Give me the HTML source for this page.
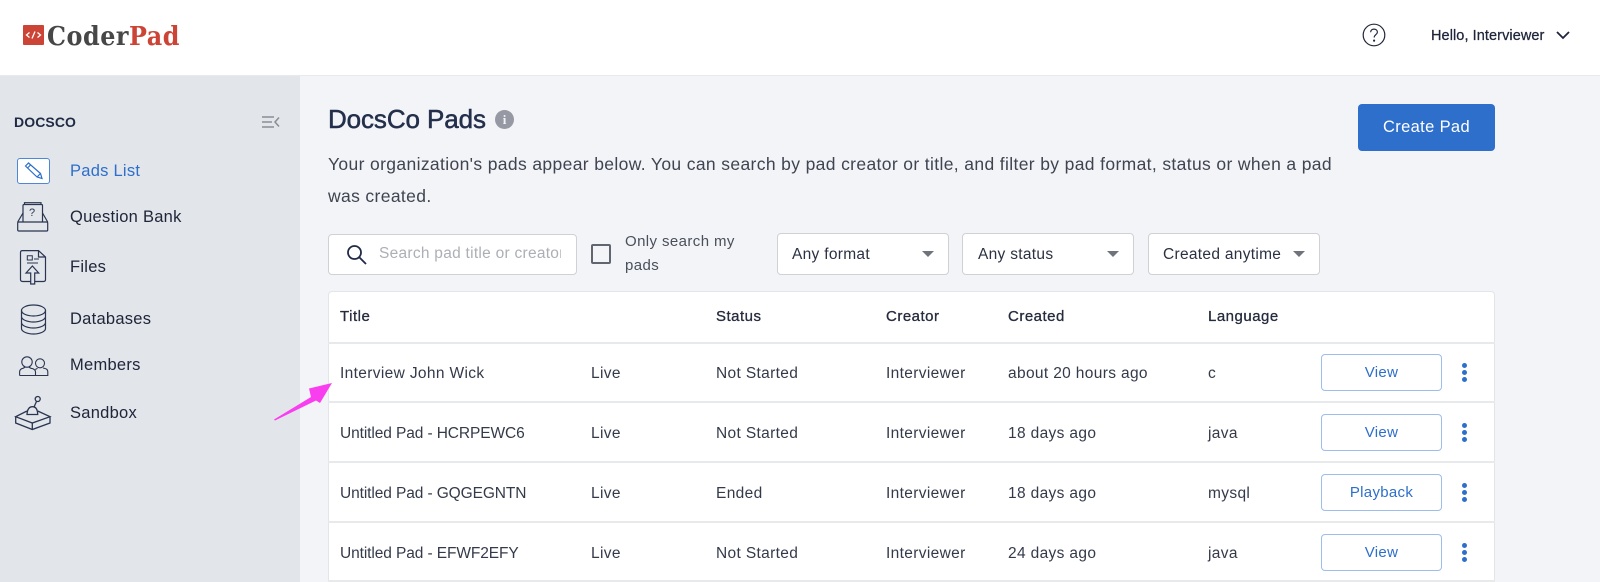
<!DOCTYPE html>
<html lang="en"><head><meta charset="utf-8"><title>CoderPad</title>
<style>
html,body{margin:0;padding:0;width:1600px;height:582px;overflow:hidden}
body{position:relative;background:#f3f4f8;font-family:"Liberation Sans",sans-serif;color:#2a3040}
.t{position:absolute;white-space:nowrap;line-height:20px;height:20px}
.abs{position:absolute;box-sizing:border-box}
.side{font-size:16.500px;color:#20263a;left:70px;letter-spacing:.26px}
.th{font-size:15px;color:#252b3d;letter-spacing:.5px;-webkit-text-stroke:.3px #252b3d}
.td{font-size:15.500px;color:#343a4a;letter-spacing:.35px}
.td.u{letter-spacing:-.1px}
.sel{background:#fff;border:1px solid #cfd1d4;border-radius:4px;top:233px;height:42px}
.sel i{position:absolute;top:17px;width:0;height:0;border-left:6px solid transparent;border-right:6px solid transparent;border-top:6px solid #6f737b}
.seltx{font-size:15.500px;color:#2b3142;letter-spacing:.3px;top:245px}
.btn{left:1321px;width:121px;height:37px;background:#fff;border:1px solid #9dbdec;border-radius:4px;text-align:center;font-size:15px;line-height:35px;color:#2d6fcb;letter-spacing:.3px}
.line{left:328px;width:1167px;height:2px;background:#e8e9eb}
.dot{width:5px;height:5px;border-radius:50%;background:#2d6fcb;left:1462px}
svg{position:absolute;overflow:visible}
</style></head><body>

<div class="abs" style="left:0;top:0;width:1600px;height:76px;background:#fff;border-bottom:1px solid #e8e9ec"></div>
<div class="abs" style="left:0;top:76px;width:300px;height:506px;background:#e2e5ea"></div>

<!-- logo -->
<div class="abs" style="left:23px;top:25px;width:21px;height:20px;background:#cc4435;border-radius:1px"></div>
<svg style="left:23px;top:25px" width="21" height="20" fill="none" stroke="#fff" stroke-width="1.300"><path d="M6.500 7.500 3.500 10l3 2.500M14.500 7.500l3 2.500-3 2.500M12 6.500 9 13.500"/></svg>
<div class="t" style="left:47px;top:21px;height:32px;line-height:32px;font-family:'DejaVu Serif Condensed','DejaVu Serif',serif;font-stretch:condensed;font-weight:bold;font-size:26.500px;letter-spacing:.55px;color:#474747">Coder<span style="color:#cc4435">Pad</span></div>

<!-- header right -->
<svg style="left:1362px;top:23px" width="24" height="24" fill="none" stroke="#20263a" stroke-width="1.200"><circle cx="12" cy="12" r="10.800"/><path d="M8.600 9.300c0-2 1.500-3.200 3.400-3.200s3.400 1.200 3.400 3c0 2.400-3.200 2.600-3.200 5.400"/><circle cx="12.100" cy="17.600" r=".5" fill="#20263a"/></svg>
<div class="t" style="left:1431px;top:26px;font-size:14.500px;color:#20263a;letter-spacing:.08px;-webkit-text-stroke:.25px #20263a">Hello, Interviewer</div>
<svg style="left:1556px;top:31px" width="14" height="9" fill="none" stroke="#20263a" stroke-width="1.800"><path d="M1 1l6 6 6-6"/></svg>

<!-- sidebar -->
<div class="t" style="left:14px;top:112px;font-size:14px;font-weight:bold;color:#1f2a44;letter-spacing:.1px">DOCSCO</div>
<svg style="left:262px;top:116px" width="18" height="12" fill="none" stroke="#8a8d94" stroke-width="1.500"><path d="M0 1h12M0 6h10M0 11h12M17 1.500 13 6l4 4.500"/></svg>

<div class="abs" style="left:17px;top:158px;width:33px;height:26px;background:#fff;border:1.500px solid #4f86d6;border-radius:3px"></div>
<svg style="left:17px;top:158px" width="33" height="26" fill="none" stroke="#2d6fcb" stroke-width="1.200"><path d="M8.500 8 11.500 5 23.500 15.500 25 20.500 20 19ZM10.500 10 13.500 7M23.500 15.500 20 19"/></svg>
<div class="t side" style="top:161px;color:#2d6fcb">Pads List</div>

<svg style="left:17px;top:202px" width="32" height="30" fill="none" stroke="#2a3550" stroke-width="1.200"><path d="M6 20V3.500Q6 2.500 7 2.500H24.500Q25.500 2.500 25.500 3.500V20M7.500 2.500V.7H24V2.500"/><path d="M.7 20 6 11M30.700 20 25.500 11"/><rect x=".7" y="20" width="30" height="9" rx="1"/><text x="12" y="14" font-family="Liberation Sans,sans-serif" font-size="11" fill="#2a3550" stroke="none">?</text></svg>
<div class="t side" style="top:207px">Question Bank</div>

<svg style="left:19px;top:250px" width="28" height="35" fill="none" stroke="#2a3550" stroke-width="1.200"><path d="M11.500 31.500H3.500Q1.500 31.500 1.500 29.500V2.500Q1.500 .6 3.500 .6H19.500L26.500 7V29.500Q26.500 31.500 24.500 31.500H16M19.500 .6V7H26.500"/><path d="M8.300 5.700h5v4.300h-5zM15 9h5M8 13h11" stroke-width="1"/><path d="M15.700 34V23H19.700L13.400 16 7 23H11.700V34Z" stroke-width="1.200"/></svg>
<div class="t side" style="top:257px">Files</div>

<svg style="left:20px;top:304px" width="27" height="31" fill="none" stroke="#2a3550" stroke-width="1.200"><ellipse cx="13.500" cy="6.500" rx="12" ry="5.500"/><path d="M1.500 6.500V24.500C1.500 27.500 7 30 13.500 30S25.500 27.500 25.500 24.500V6.500M1.500 12.500C1.500 15.500 7 18 13.500 18S25.500 15.500 25.500 12.500M1.500 18.500C1.500 21.500 7 24 13.500 24S25.500 21.500 25.500 18.500"/></svg>
<div class="t side" style="top:309px">Databases</div>

<svg style="left:19px;top:356px" width="30" height="21" fill="none" stroke="#2a3550" stroke-width="1.100"><circle cx="8" cy="6" r="5.200"/><circle cx="21" cy="7.300" r="4.500"/><path d="M.6 19.500V16Q.6 13 4 12.300L6 11.300M10 11.300 12 12.300Q16.500 13 16.500 16V19.500H.6M16.500 19.500H28.800V16Q28.800 13 26 12.500L24 12M18.500 12.300 16.300 13.500"/></svg>
<div class="t side" style="top:355px">Members</div>

<svg style="left:15px;top:396px" width="36" height="35" fill="none" stroke="#2a3550" stroke-width="1.300"><circle cx="22.700" cy="3" r="2.500"/><path d="M21.500 5.500 19 11"/><path d="M12 18.500Q12.500 10.700 17.500 10.700T22.700 18.500Z"/><path d="M12 15 .7 20.700 17.300 27 35 20.700 22.700 15"/><path d="M.7 20.700V27L17.300 33.500 35 27V20.700M17.300 27V33.500"/></svg>
<div class="t side" style="top:403px">Sandbox</div>

<!-- title -->
<div class="t" style="left:328px;top:104px;height:30px;line-height:30px;font-size:26px;color:#232f4b;letter-spacing:-.1px;-webkit-text-stroke:.5px #232f4b">DocsCo Pads</div>
<div class="abs" style="left:495px;top:110px;width:19px;height:19px;border-radius:50%;background:#9699a3;color:#f3f4f8;font:bold 13px/19px 'Liberation Serif',serif;text-align:center">i</div>
<div class="t" style="left:328px;top:154px;font-size:17.500px;color:#3f4450;letter-spacing:.36px">Your organization's pads appear below. You can search by pad creator or title, and filter by pad format, status or when a pad</div>
<div class="t" style="left:328px;top:186px;font-size:17.500px;color:#3f4450;letter-spacing:.36px">was created.</div>

<div class="abs" style="left:1358px;top:104px;width:137px;height:47px;background:#2d6fcb;border-radius:4px;color:#fff;font-size:16.500px;line-height:46px;text-align:center;letter-spacing:.35px">Create Pad</div>

<!-- search -->
<div class="abs" style="left:328px;top:234px;width:249px;height:41px;background:#fff;border:1px solid #cfd1d4;border-radius:4px"></div>
<svg style="left:346px;top:244px" width="22" height="21" fill="none" stroke="#1f2a44" stroke-width="1.800"><circle cx="8.500" cy="8.500" r="6.500"/><path d="M13.500 13.500 20 20"/></svg>
<div class="abs" style="left:379px;top:244px;width:182px;height:20px;overflow:hidden"><span class="t" style="left:0;top:0;font-size:15.500px;color:#acafb6;letter-spacing:.27px">Search pad title or creator</span></div>
<div class="abs" style="left:591px;top:244px;width:20px;height:20px;border:2px solid #60656f;border-radius:2px;background:#f3f4f8"></div>
<div class="t" style="left:625px;top:232px;font-size:15px;color:#4a4f5b;letter-spacing:.4px">Only search my</div>
<div class="t" style="left:625px;top:256px;font-size:15px;color:#4a4f5b;letter-spacing:.4px">pads</div>

<div class="abs sel" style="left:777px;width:172px"><i style="left:144px"></i></div>
<div class="t seltx" style="left:792px">Any format</div>
<div class="abs sel" style="left:962px;width:172px"><i style="left:144px"></i></div>
<div class="t seltx" style="left:978px">Any status</div>
<div class="abs sel" style="left:1148px;width:172px"><i style="left:144px"></i></div>
<div class="t seltx" style="left:1163px">Created anytime</div>

<!-- table -->
<div class="abs" style="left:328px;top:291px;width:1167px;height:291px;background:#fff;border:1px solid #e4e5e8;border-bottom:0;border-radius:4px 4px 0 0"></div>
<div class="abs line" style="top:342px"></div>
<div class="abs line" style="top:401px"></div>
<div class="abs line" style="top:461px"></div>
<div class="abs line" style="top:521px"></div>
<div class="abs line" style="top:580px"></div>

<div class="t th" style="left:340px;top:307px">Title</div>
<div class="t th" style="left:716px;top:307px">Status</div>
<div class="t th" style="left:886px;top:307px">Creator</div>
<div class="t th" style="left:1008px;top:307px">Created</div>
<div class="t th" style="left:1208px;top:307px">Language</div>

<div class="t td" style="left:340px;top:364px">Interview John Wick</div>
<div class="t td" style="left:591px;top:364px">Live</div>
<div class="t td" style="left:716px;top:364px">Not Started</div>
<div class="t td" style="left:886px;top:364px">Interviewer</div>
<div class="t td" style="left:1008px;top:364px">about 20 hours ago</div>
<div class="t td" style="left:1208px;top:364px">c</div>
<div class="abs btn" style="top:354px">View</div>
<div class="abs dot" style="top:363px"></div><div class="abs dot" style="top:370px"></div><div class="abs dot" style="top:377px"></div>

<div class="t td u" style="left:340px;top:424px">Untitled Pad - HCRPEWC6</div>
<div class="t td" style="left:591px;top:424px">Live</div>
<div class="t td" style="left:716px;top:424px">Not Started</div>
<div class="t td" style="left:886px;top:424px">Interviewer</div>
<div class="t td" style="left:1008px;top:424px">18 days ago</div>
<div class="t td" style="left:1208px;top:424px">java</div>
<div class="abs btn" style="top:414px">View</div>
<div class="abs dot" style="top:423px"></div><div class="abs dot" style="top:430px"></div><div class="abs dot" style="top:437px"></div>

<div class="t td u" style="left:340px;top:484px">Untitled Pad - GQGEGNTN</div>
<div class="t td" style="left:591px;top:484px">Live</div>
<div class="t td" style="left:716px;top:484px">Ended</div>
<div class="t td" style="left:886px;top:484px">Interviewer</div>
<div class="t td" style="left:1008px;top:484px">18 days ago</div>
<div class="t td" style="left:1208px;top:484px">mysql</div>
<div class="abs btn" style="top:474px">Playback</div>
<div class="abs dot" style="top:483px"></div><div class="abs dot" style="top:490px"></div><div class="abs dot" style="top:497px"></div>

<div class="t td u" style="left:340px;top:544px">Untitled Pad - EFWF2EFY</div>
<div class="t td" style="left:591px;top:544px">Live</div>
<div class="t td" style="left:716px;top:544px">Not Started</div>
<div class="t td" style="left:886px;top:544px">Interviewer</div>
<div class="t td" style="left:1008px;top:544px">24 days ago</div>
<div class="t td" style="left:1208px;top:544px">java</div>
<div class="abs btn" style="top:534px">View</div>
<div class="abs dot" style="top:543px"></div><div class="abs dot" style="top:550px"></div><div class="abs dot" style="top:557px"></div>

<!-- pink arrow -->
<svg style="left:0;top:0" width="1600" height="582"><path d="M274 419.500 311 397 309 388.500 332 383 320 403 316 400.500 275 420.500Z" fill="#f93ef0"/></svg>
</body></html>
